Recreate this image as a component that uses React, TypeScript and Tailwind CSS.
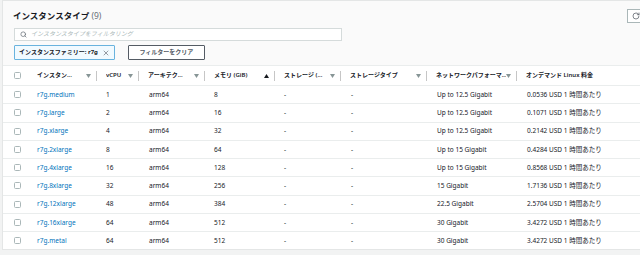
import { Search, X, RotateCw } from "lucide-react";

type Row = {
  name: string;
  vcpu: number;
  mem: number;
  net: string;
  price: string;
};

const rows: Row[] = [
  { name: "r7g.medium", vcpu: 1, mem: 8, net: "Up to 12.5 Gigabit", price: "0.0536" },
  { name: "r7g.large", vcpu: 2, mem: 16, net: "Up to 12.5 Gigabit", price: "0.1071" },
  { name: "r7g.xlarge", vcpu: 4, mem: 32, net: "Up to 12.5 Gigabit", price: "0.2142" },
  { name: "r7g.2xlarge", vcpu: 8, mem: 64, net: "Up to 15 Gigabit", price: "0.4284" },
  { name: "r7g.4xlarge", vcpu: 16, mem: 128, net: "Up to 15 Gigabit", price: "0.8568" },
  { name: "r7g.8xlarge", vcpu: 32, mem: 256, net: "15 Gigabit", price: "1.7136" },
  { name: "r7g.12xlarge", vcpu: 48, mem: 384, net: "22.5 Gigabit", price: "2.5704" },
  { name: "r7g.16xlarge", vcpu: 64, mem: 512, net: "30 Gigabit", price: "3.4272" },
  { name: "r7g.metal", vcpu: 64, mem: 512, net: "30 Gigabit", price: "3.4272" },
];

// column widths, left to right
const cols = ["w-[25px]", "w-[69px]", "w-[42px]", "w-[66px]", "w-[70px]", "w-[66px]", "w-[86px]", "w-[90px]", "flex-1"];

function Checkbox() {
  return <span className="block h-[7px] w-[7px] rounded-[1.5px] border border-[#aab7b8] bg-white" />;
}

function SortIcon({ active }: { active?: boolean }) {
  return (
    <svg width="5" height="4" viewBox="0 0 10 8" className="shrink-0">
      {active ? (
        <path d="M5 0 L10 8 L0 8 Z" fill="#16191f" />
      ) : (
        <path d="M0 0 L10 0 L5 8 Z" fill="#879596" />
      )}
    </svg>
  );
}

function HeadCell({ label, width, active, last }: { label: string; width: string; active?: boolean; last?: boolean }) {
  return (
    <div className={`${width} flex items-center pl-[9px]`}>
      <span className="min-w-0 flex-1 overflow-hidden whitespace-nowrap">{label}</span>
      {!last && (
        <>
          <SortIcon active={active} />
          <span className="ml-[5px] h-[10px] w-px bg-[#c6c6c6]" />
        </>
      )}
    </div>
  );
}

export default function App() {
  return (
    <div
      className="h-[255px] w-[640px] overflow-hidden bg-[#f2f3f3] text-[#16191f]"
      style={{ fontFamily: '"Noto Sans", "Noto Sans CJK JP", sans-serif' }}
    >
      <div className="ml-[2px] border-l border-b border-t border-[#e4e6e6] bg-[#fafafa]">
        {/* header */}
        <div className="flex items-start justify-between pl-[10px] pt-[6px]">
          <h2 className="text-[8.5px] font-bold leading-[18px]">
            インスタンスタイプ <span className="font-normal text-[#687078]">(9)</span>
          </h2>
          <button className="mr-[-17px] mt-[2px] flex h-[14px] w-[30px] shrink-0 items-center border border-[#aab7b8] bg-white pl-[4px]">
            <RotateCw size={8} strokeWidth={2.2} className="text-[#545b64]" />
          </button>
        </div>

        <div className="ml-[11px] mt-[3px] flex h-[13px] w-[328px] items-center border border-[#d5dbdb] bg-white pl-[5px]">
          <Search size={7} strokeWidth={2.5} className="text-[#687078]" />
          <span className="ml-[4px] text-[6px] italic text-[#aab7b8]">インスタンスタイプをフィルタリング</span>
        </div>

        <div className="ml-[11px] mt-[4px] flex h-[15px] items-center gap-[13px]">
          <div className="flex h-full items-center gap-[4px] rounded-[1px] border border-[#69b3de] bg-[#f1faff] px-[4px]">
            <span className="text-[6px] font-bold">インスタンスファミリー: r7g</span>
            <X size={8} strokeWidth={1.8} className="text-[#545b64]" />
          </div>
          <button className="flex h-full w-[77px] items-center justify-center rounded-[1px] border border-[#545b64] bg-white text-[6px] font-bold text-[#545b64]">
            フィルターをクリア
          </button>
        </div>

        {/* table */}
        <div className="mt-[5px] border-t border-[#eaeded] bg-white text-[6.5px]">
          <div className="flex h-[19px] items-center text-[6px] font-semibold text-[#16191f]">
            <div className={`${cols[0]} flex justify-center pl-[4px]`}>
              <Checkbox />
            </div>
            <HeadCell label="インスタン..." width={cols[1]} />
            <HeadCell label="vCPU" width={cols[2]} />
            <HeadCell label="アーキテク..." width={cols[3]} />
            <HeadCell label="メモリ (GiB)" width={cols[4]} active />
            <HeadCell label="ストレージ (..." width={cols[5]} />
            <HeadCell label="ストレージタイプ" width={cols[6]} />
            <HeadCell label="ネットワークパフォーマ..." width={cols[7]} />
            <HeadCell label="オンデマンド Linux 料金" width={cols[8]} last />
          </div>
          {rows.map((r) => (
            <div key={r.name} className="flex h-[18.25px] items-center border-t border-[#eaeded]">
              <div className={`${cols[0]} flex justify-center pl-[4px]`}>
                <Checkbox />
              </div>
              <div className={`${cols[1]} pl-[9px] text-[#0073bb]`}>{r.name}</div>
              <div className={`${cols[2]} pl-[9px]`}>{r.vcpu}</div>
              <div className={`${cols[3]} pl-[10px]`}>arm64</div>
              <div className={`${cols[4]} pl-[9px]`}>{r.mem}</div>
              <div className={`${cols[5]} pl-[9px]`}>-</div>
              <div className={`${cols[6]} pl-[10px]`}>-</div>
              <div className={`${cols[7]} pl-[10px]`}>{r.net}</div>
              <div className={`${cols[8]} whitespace-nowrap pl-[10px]`}>{r.price} USD 1 時間あたり</div>
            </div>
          ))}
        </div>
      </div>
    </div>
  );
}
